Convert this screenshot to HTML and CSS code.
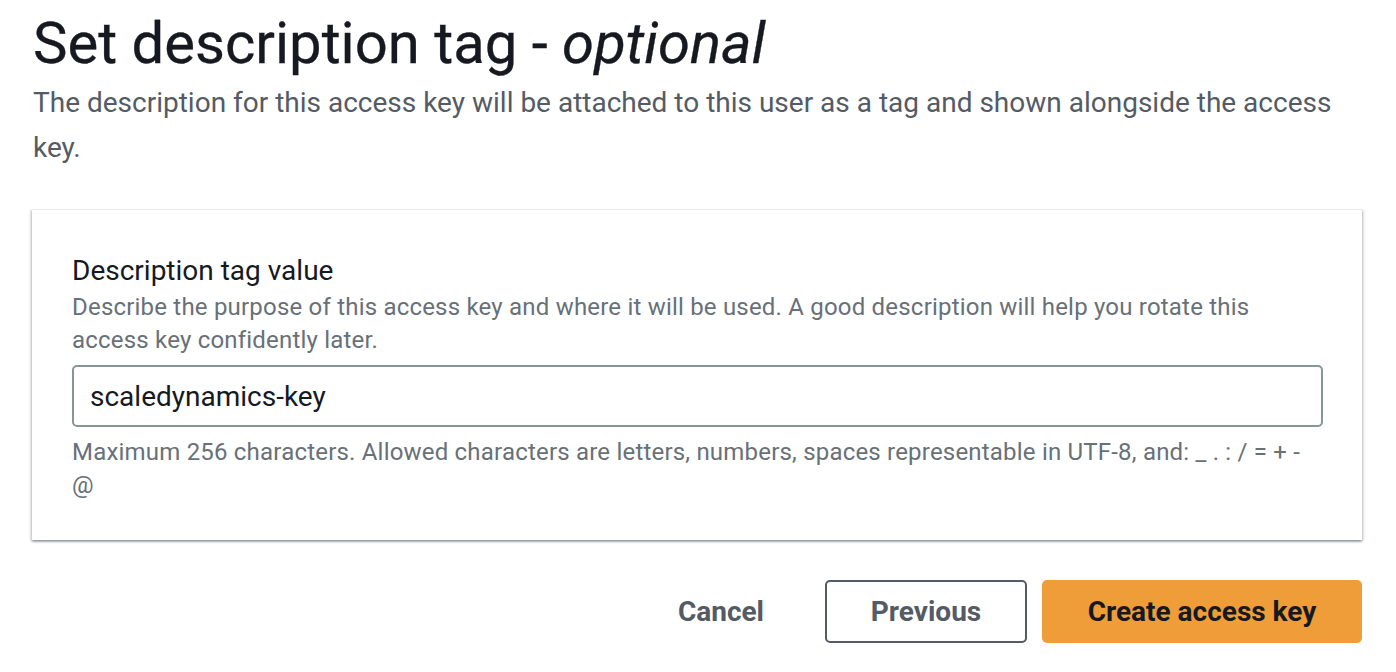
FILE: index.html
```html
<!DOCTYPE html>
<html lang="en">
<head>
<meta charset="utf-8">
<title>Set description tag</title>
<link rel="stylesheet" href="styles.css">
</head>
<body>
<main class="page">
  <header class="header">
    <h1 class="title">Set description tag - <em>optional</em></h1>
    <p class="lead">The description for this access key will be attached to this user as a tag and shown alongside the access key.</p>
  </header>
  <section class="card">
    <div class="field">
      <label class="label" for="desc">Description tag value</label>
      <p class="help">Describe the purpose of this access key and where it will be used. A good description will help you rotate this access key confidently later.</p>
      <input class="input" id="desc" type="text" value="scaledynamics-key">
      <p class="constraint">Maximum 256 characters. Allowed characters are letters, numbers, spaces representable in UTF-8, and: _ . : / = + - @</p>
    </div>
  </section>
  <div class="actions">
    <button class="btn btn-link" type="button">Cancel</button>
    <button class="btn btn-normal" type="button">Previous</button>
    <button class="btn btn-primary" type="button">Create access key</button>
  </div>
</main>
</body>
</html>
```

FILE: styles.css
```css
* { box-sizing: border-box; }
html, body { margin: 0; padding: 0; background: #ffffff; }
body {
  font-family: Roboto, "Open Sans", sans-serif;
  color: #16191f;
}
.page {
  padding: 7px 34px 0 32px;
}
.header { padding-left: 1px; }
.title {
  margin: 0;
  font-size: 58px;
  line-height: 72px;
  font-weight: 400;
  color: #16191f;
  -webkit-text-stroke: 0.3px #16191f;
}
.title em { font-style: italic; }
.lead {
  margin: 1px 0 0 0;
  font-size: 28px;
  line-height: 45px;
  color: #545b64;
  padding-right: 20px;
}
.card {
  margin-top: 39px;
  border-top: 1px solid #eaeded;
  box-shadow: 0 2px 2px 0 rgba(0, 28, 36, 0.3), 2px 1px 2px 0 rgba(0, 28, 36, 0.12), -2px 1px 2px 0 rgba(0, 28, 36, 0.12);
  padding: 43px 39px 38px 40px;
  background: #fff;
}
.label {
  display: block;
  font-size: 28px;
  line-height: 36px;
  color: #16191f;
}
.help {
  margin: 2px 0 0 0;
  font-size: 24px;
  line-height: 33px;
  letter-spacing: 0.2px;
  color: #687078;
}
.input {
  display: block;
  width: 100%;
  height: 62px;
  margin-top: 8px;
  border: 2px solid #879596;
  border-radius: 5px;
  padding: 0 16px;
  font-family: inherit;
  font-size: 28px;
  color: #16191f;
  background: #fff;
  outline: none;
}
.constraint {
  margin: 9px 0 0 0;
  padding-right: 10px;
  font-size: 24px;
  line-height: 33px;
  letter-spacing: 0.2px;
  color: #687078;
}
.actions {
  display: flex;
  justify-content: flex-end;
  align-items: center;
  gap: 15px;
  margin-top: 40px;
}
.btn {
  font-family: inherit;
  font-size: 28px;
  font-weight: 700;
  height: 63px;
  border-radius: 5px;
  padding: 0;
  cursor: pointer;
}
.btn-link {
  border: 2px solid transparent;
  background: transparent;
  color: #545b64;
  padding: 0 40px;
  margin-right: 4px;
}
.btn-normal {
  border: 2px solid #545b64;
  background: #fff;
  color: #545b64;
  width: 202px;
}
.btn-primary {
  border: 2px solid #ef9d38;
  background: #ef9d38;
  color: #16191f;
  width: 320px;
}
```
